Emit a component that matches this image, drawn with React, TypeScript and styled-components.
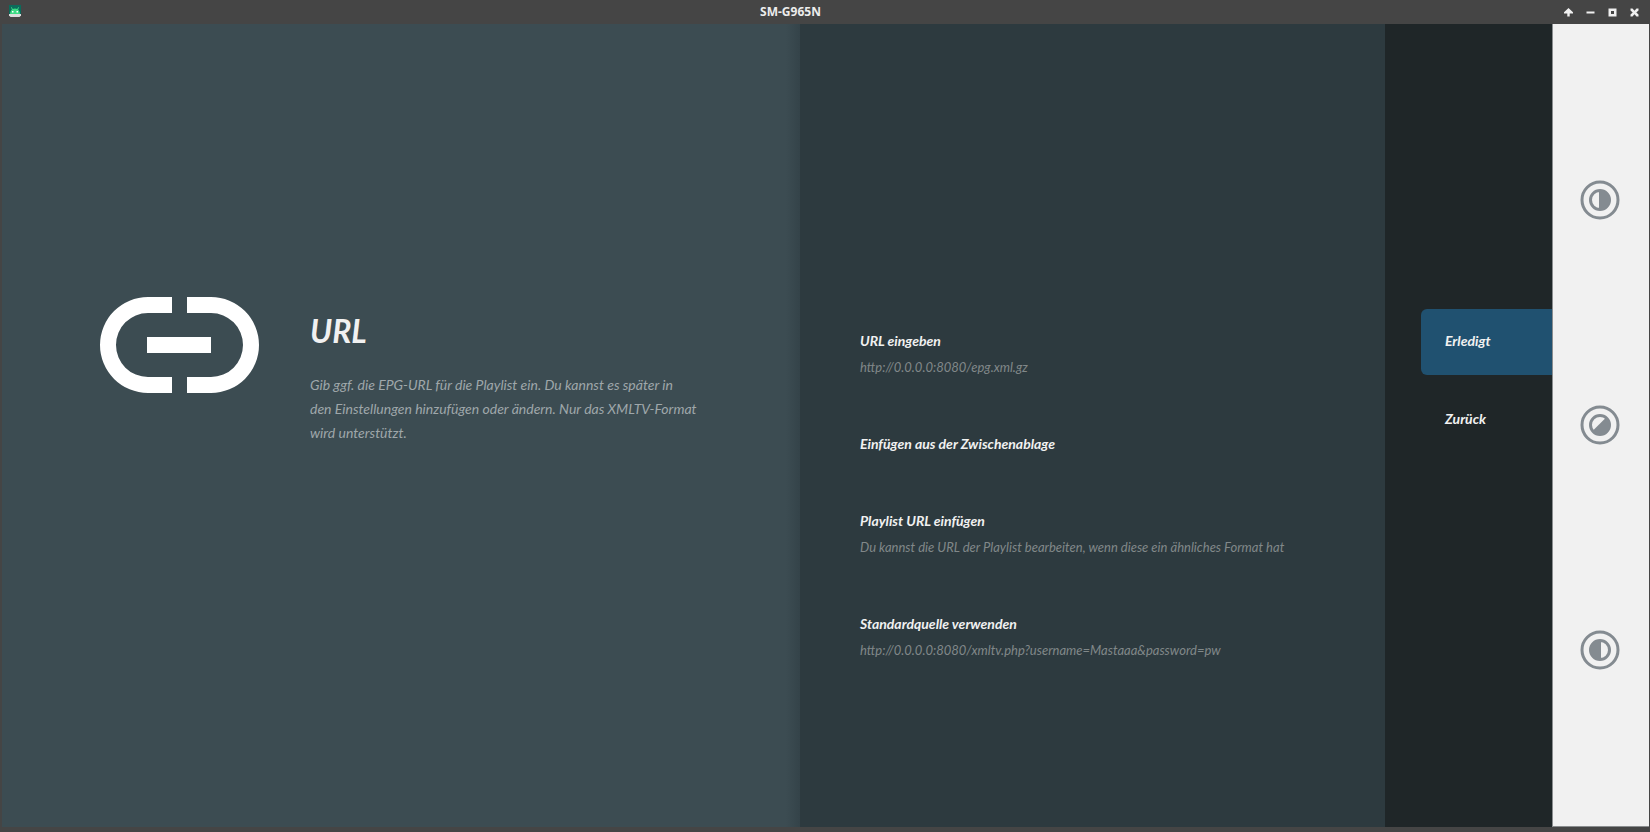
import React from "react";
import styled, { createGlobalStyle } from "styled-components";

const GlobalStyle = createGlobalStyle`
  * { box-sizing: border-box; }
  body { margin: 0; background: #454545; }
  h1, h2, p, ul { margin: 0; padding: 0; }
  button { border: 0; background: none; padding: 0; margin: 0; font: inherit; color: inherit; text-align: left; cursor: pointer; }
`;

const Window = styled.div`
  min-height: 100vh;
  display: flex;
  flex-direction: column;
  padding: 0 1px 5px 2px;
  background: #454545;
  font-family: Lato, "Open Sans", sans-serif;
  font-style: italic;
`;

const TitleBar = styled.header`
  height: 24px;
  display: flex;
  align-items: center;
  color: #ececec;
`;

const AppIcon = styled.svg`
  width: 14px;
  height: 14px;
  margin: 0 2px 0 6px;
`;

const WindowTitle = styled.h1`
  flex: 1;
  text-align: center;
  font: normal 700 12px/24px "Noto Sans", sans-serif;
`;

const WindowControls = styled.div`
  display: flex;
  width: 92px;
  padding-right: 4px;
  justify-content: flex-end;
`;

const WindowButton = styled.button`
  width: 22px;
  height: 24px;
  display: grid;
  place-items: center;
`;

const Screen = styled.div`
  flex: 1;
  display: grid;
  grid-template-columns: minmax(0, 798fr) minmax(0, 585fr) minmax(0, 167fr) 97px;
`;

const Guidance = styled.section`
  display: flex;
  align-items: flex-start;
  gap: 51px;
  padding: 273px 60px 0 98px;
  background: linear-gradient(to left, #344349, #3c4c52 14px);
`;

const LinkArt = styled.svg`
  flex: none;
  width: 159px;
  height: 96px;
`;

const GuidanceText = styled.div`
  padding-top: 12px;
`;

const Heading = styled.h2`
  color: #f1f1f1;
  font-size: 32px;
  line-height: 44px;
  font-weight: 700;
`;

const Description = styled.p`
  margin-top: 20px;
  color: #9fa7aa;
  font-size: 14px;
  line-height: 24px;
`;

const Actions = styled.ul`
  list-style: none;
  display: flex;
  flex-direction: column;
  gap: 51px;
  padding: 304px 60px 0;
  background: #2d3a3f;
`;

const Action = styled.button`
  display: block;
  width: 100%;
`;

const ActionTitle = styled.span`
  display: block;
  color: #f1f1f1;
  font-size: 14px;
  line-height: 26px;
  font-weight: 700;
`;

const ActionNote = styled.span`
  display: block;
  color: #818889;
  font-size: 13px;
  line-height: 26px;
  white-space: nowrap;
`;

const Steps = styled.nav`
  display: flex;
  flex-direction: column;
  gap: 12px;
  padding: 285px 0 0 36px;
  background: #1f2628;
`;

const StepButton = styled.button<{ $selected?: boolean }>`
  height: 66px;
  padding: 0 0 4px 24px;
  border-radius: 6px 0 0 6px;
  background: ${(p) => (p.$selected ? "#205170" : "transparent")};
  color: #f1f1f1;
  font-size: 14px;
  font-weight: 700;
`;

const SideBar = styled.aside`
  display: flex;
  flex-direction: column;
  align-items: center;
  justify-content: center;
  gap: 185px;
  padding: 0 2px 1px 0;
  border: solid #8a8d8f;
  border-width: 0 0 1px 1px;
  background: #f1f1f1;
`;

const RoundButton = styled.button`
  width: 40px;
  height: 40px;
`;

const actions = [
  { title: "URL eingeben", note: "http://0.0.0.0:8080/epg.xml.gz" },
  { title: "Einfügen aus der Zwischenablage" },
  {
    title: "Playlist URL einfügen",
    note: "Du kannst die URL der Playlist bearbeiten, wenn diese ein ähnliches Format hat",
  },
  {
    title: "Standardquelle verwenden",
    note: "http://0.0.0.0:8080/xmltv.php?username=Mastaaa&password=pw",
  },
];

const controls = [
  { label: "Nach oben", shape: <path d="M4.500 0 9 4.300V5.500H5.700V8.500H3.300V5.500H0V4.300z" /> },
  { label: "Minimieren", shape: <path d="M.5 3.500h8v2h-8z" /> },
  { label: "Maximieren", shape: <path fillRule="evenodd" d="M.5.500h8v8h-8zM3 3v3h3V3z" /> },
  {
    label: "Schließen",
    shape: <path d="M.5.500h2l2 2.200 2-2.200h2v2L6.300 4.500l2.200 2v2h-2l-2-2.200-2 2.200h-2v-2l2.200-2-2.200-2z" />,
  },
];

const halves = [
  { label: "Anzeige rechts", angle: 0 },
  { label: "Anzeige diagonal", angle: 45 },
  { label: "Anzeige links", angle: 180 },
];

export default function App() {
  return (
    <Window>
      <GlobalStyle />
      <TitleBar>
        <AppIcon viewBox="0 0 14 14" aria-hidden="true">
          <path fill="#0b6b5b" d="M1 0h12v10H1z" />
          <path fill="#3ddc84" d="M2 9c0-2 .8-3.700 2-4.600L3 2.500l.6-.4 1.200 1.800a5.500 5.500 0 0 1 4.400 0l1.200-1.800.6.4-1 1.900c1.200.9 2 2.600 2 4.600z" />
          <path fill="#fff" d="M4 6h1.500v1.500H4zM8.500 6H10v1.500H8.500z" />
          <path fill="#dcdcdc" d="M1 9h12v1.500L11.500 12h-9L1 10.500z" />
        </AppIcon>
        <WindowTitle>SM-G965N</WindowTitle>
        <WindowControls>
          {controls.map((c) => (
            <WindowButton key={c.label} aria-label={c.label}>
              <svg width="9" height="9" viewBox="0 0 9 9" fill="#f0f0f0">{c.shape}</svg>
            </WindowButton>
          ))}
        </WindowControls>
      </TitleBar>
      <Screen>
        <Guidance>
          <LinkArt viewBox="0 0 159 96" fill="#fff" aria-hidden="true">
            <path d="M72 0H48a48 48 0 0 0 0 96h24V80H48a32 32 0 0 1 0-64h24z" />
            <path d="M87 0h24a48 48 0 0 1 0 96H87V80h24a32 32 0 0 0 0-64H87z" />
            <path d="M47 40h64v16H47z" />
          </LinkArt>
          <GuidanceText>
            <Heading>URL</Heading>
            <Description>
              Gib ggf. die EPG-URL für die Playlist ein. Du kannst es später in
              <br />
              den Einstellungen hinzufügen oder ändern. Nur das XMLTV-Format
              <br />
              wird unterstützt.
            </Description>
          </GuidanceText>
        </Guidance>
        <Actions>
          {actions.map((a) => (
            <li key={a.title}>
              <Action>
                <ActionTitle>{a.title}</ActionTitle>
                {a.note && <ActionNote>{a.note}</ActionNote>}
              </Action>
            </li>
          ))}
        </Actions>
        <Steps>
          <StepButton $selected>Erledigt</StepButton>
          <StepButton>Zurück</StepButton>
        </Steps>
        <SideBar>
          {halves.map((h) => (
            <RoundButton key={h.label} aria-label={h.label}>
              <svg width="40" height="40" viewBox="0 0 40 40">
                <circle cx="20" cy="20" r="18" fill="none" stroke="#848b91" strokeWidth="3" />
                <circle cx="20" cy="20" r="9.500" fill="none" stroke="#848b91" strokeWidth="3" />
                <path fill="#848b91" transform={`rotate(${h.angle} 20 20)`} d="M19 10h1a10 10 0 0 1 0 20h-1z" />
              </svg>
            </RoundButton>
          ))}
        </SideBar>
      </Screen>
    </Window>
  );
}
